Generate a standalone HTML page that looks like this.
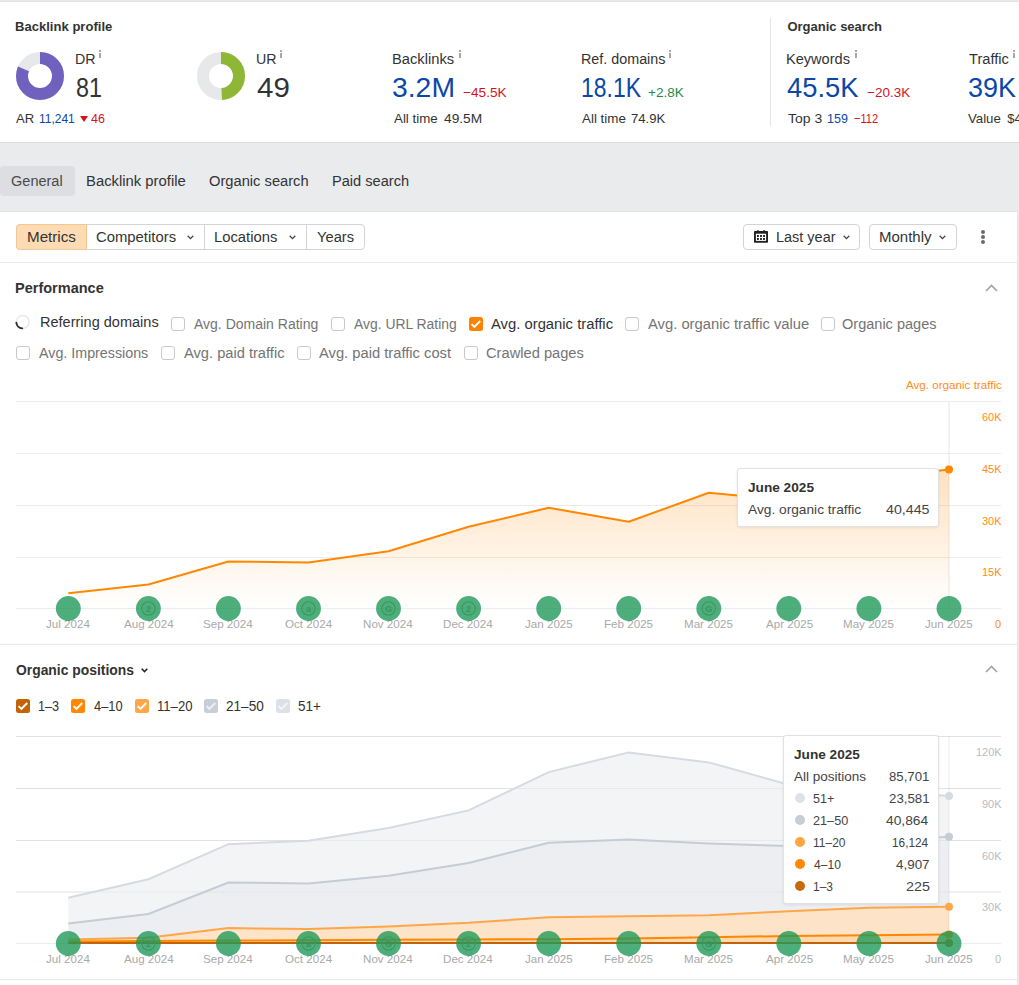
<!DOCTYPE html>
<html><head><meta charset="utf-8"><style>
html,body{margin:0;padding:0}
body{width:1019px;height:985px;position:relative;overflow:hidden;background:#eaebed;font-family:'Liberation Sans', sans-serif}
.t{position:absolute;white-space:nowrap;line-height:1}
</style></head><body>
<div style="position:absolute;left:0px;top:1px;width:1019px;height:1px;background:#e3e4e7"></div>
<div style="position:absolute;left:0px;top:2px;width:1019px;height:140px;background:#fff"></div>
<div style="position:absolute;left:0px;top:142px;width:1019px;height:1px;background:#dcdde0"></div>
<div class="t" style="left:15.49px;top:20px;font-size:13px;color:#333333;font-weight:bold;transform:scaleX(1.0053);transform-origin:0 0;">Backlink profile</div>
<div class="t" style="left:787.40px;top:20px;font-size:13px;color:#333333;font-weight:bold;">Organic search</div>
<div style="position:absolute;left:770px;top:18px;width:1px;height:108px;background:#e6e6e6"></div>
<svg style="position:absolute;left:16px;top:52px" width="48" height="48" viewBox="0 0 48 48"><circle cx="24" cy="24" r="18" fill="none" stroke="#e7e8ea" stroke-width="12"/><circle cx="24" cy="24" r="18" fill="none" stroke="#7161bf" stroke-width="12" stroke-dasharray="91.61 113.10" transform="rotate(-90 24 24)"/></svg>
<svg style="position:absolute;left:197px;top:52px" width="48" height="48" viewBox="0 0 48 48"><circle cx="24" cy="24" r="18" fill="none" stroke="#e7e8ea" stroke-width="12"/><circle cx="24" cy="24" r="18" fill="none" stroke="#8db735" stroke-width="12" stroke-dasharray="55.42 113.10" transform="rotate(-90 24 24)"/></svg>
<div class="t" style="left:75.48px;top:52px;font-size:14px;color:#333333;transform:scaleX(1.0167);transform-origin:0 0;">DR</div>
<div style="position:absolute;left:99px;top:50px;width:2px;height:2px;background:#aaaaaa"></div>
<div style="position:absolute;left:99px;top:53px;width:2px;height:5px;background:#a6a6a6"></div>
<div class="t" style="left:76.24px;top:75px;font-size:27px;color:#333333;transform:scaleX(0.8643);transform-origin:0 0;">81</div>
<div class="t" style="left:15.90px;top:112px;font-size:13px;color:#333333;transform:scaleX(1.0059);transform-origin:0 0;">AR</div>
<div class="t" style="left:38.58px;top:112px;font-size:13px;color:#0b47a8;transform:scaleX(0.9216);transform-origin:0 0;">11,241</div>
<svg style="position:absolute;left:80px;top:116px" width="8" height="6" viewBox="0 0 8 6"><path d="M0 0H8L4 6Z" fill="#d6131b"/></svg>
<div class="t" style="left:90.70px;top:112px;font-size:13px;color:#d6131b;transform:scaleX(0.9643);transform-origin:0 0;">46</div>
<div class="t" style="left:256.08px;top:52px;font-size:14px;color:#333333;transform:scaleX(1.0167);transform-origin:0 0;">UR</div>
<div style="position:absolute;left:280px;top:50px;width:2px;height:2px;background:#aaaaaa"></div>
<div style="position:absolute;left:280px;top:53px;width:2px;height:5px;background:#a6a6a6"></div>
<div class="t" style="left:256.61px;top:75px;font-size:27px;color:#333333;transform:scaleX(1.0929);transform-origin:0 0;">49</div>
<div class="t" style="left:392.45px;top:52px;font-size:14px;color:#333333;transform:scaleX(1.0500);transform-origin:0 0;">Backlinks</div>
<div style="position:absolute;left:459px;top:50px;width:2px;height:2px;background:#aaaaaa"></div>
<div style="position:absolute;left:459px;top:53px;width:2px;height:5px;background:#a6a6a6"></div>
<div class="t" style="left:392.45px;top:75px;font-size:27px;color:#0b47a8;transform:scaleX(1.0491);transform-origin:0 0;">3.2M</div>
<div class="t" style="left:462.95px;top:86px;font-size:13px;color:#d6131b;transform:scaleX(1.0500);transform-origin:0 0;">&minus;45.5K</div>
<div class="t" style="left:393.50px;top:112px;font-size:13px;color:#333333;transform:scaleX(1.0238);transform-origin:0 0;">All time</div>
<div class="t" style="left:444.00px;top:112px;font-size:13px;color:#333333;transform:scaleX(1.0571);transform-origin:0 0;">49.5M</div>
<div class="t" style="left:580.98px;top:52px;font-size:14px;color:#333333;transform:scaleX(1.0235);transform-origin:0 0;">Ref. domains</div>
<div style="position:absolute;left:669px;top:50px;width:2px;height:2px;background:#aaaaaa"></div>
<div style="position:absolute;left:669px;top:53px;width:2px;height:5px;background:#a6a6a6"></div>
<div class="t" style="left:580.90px;top:75px;font-size:27px;color:#0b47a8;transform:scaleX(0.8500);transform-origin:0 0;">18.1K</div>
<div class="t" style="left:648.16px;top:86px;font-size:13px;color:#1f8a4c;transform:scaleX(1.0394);transform-origin:0 0;">+2.8K</div>
<div class="t" style="left:581.90px;top:112px;font-size:13px;color:#333333;transform:scaleX(1.0286);transform-origin:0 0;">All time</div>
<div class="t" style="left:631.39px;top:112px;font-size:13px;color:#333333;transform:scaleX(1.0091);transform-origin:0 0;">74.9K</div>
<div class="t" style="left:786.36px;top:52px;font-size:14px;color:#333333;transform:scaleX(1.0400);transform-origin:0 0;">Keywords</div>
<div style="position:absolute;left:855px;top:50px;width:2px;height:2px;background:#aaaaaa"></div>
<div style="position:absolute;left:855px;top:53px;width:2px;height:5px;background:#a6a6a6"></div>
<div class="t" style="left:787.29px;top:75px;font-size:27px;color:#0b47a8;transform:scaleX(1.0130);transform-origin:0 0;">45.5K</div>
<div class="t" style="left:866.56px;top:86px;font-size:13px;color:#d6131b;transform:scaleX(1.0375);transform-origin:0 0;">&minus;20.3K</div>
<div class="t" style="left:787.50px;top:112px;font-size:13px;color:#333333;transform:scaleX(1.0742);transform-origin:0 0;">Top 3</div>
<div class="t" style="left:827.03px;top:112px;font-size:13px;color:#0b47a8;transform:scaleX(0.9650);transform-origin:0 0;">159</div>
<div class="t" style="left:854.05px;top:112px;font-size:13px;color:#d6131b;transform:scaleX(0.8500);transform-origin:0 0;">&minus;112</div>
<div class="t" style="left:969.10px;top:52px;font-size:14px;color:#333333;transform:scaleX(1.0447);transform-origin:0 0;">Traffic</div>
<div style="position:absolute;left:1013px;top:50px;width:2px;height:2px;background:#aaaaaa"></div>
<div style="position:absolute;left:1013px;top:53px;width:2px;height:5px;background:#a6a6a6"></div>
<div class="t" style="left:968.00px;top:75px;font-size:27px;color:#0b47a8;">39K</div>
<div class="t" style="left:968.40px;top:112px;font-size:13px;color:#333333;transform:scaleX(1.0156);transform-origin:0 0;">Value</div>
<div class="t" style="left:1007.30px;top:112px;font-size:13px;color:#333333;">$4</div>
<div style="position:absolute;left:0px;top:166px;width:75px;height:30px;background:#dcdee2;border-radius:4px"></div>
<div class="t" style="left:11.36px;top:174px;font-size:14px;color:#4a4a4a;transform:scaleX(1.0375);transform-origin:0 0;">General</div>
<div class="t" style="left:85.94px;top:174px;font-size:14px;color:#333333;transform:scaleX(1.0591);transform-origin:0 0;">Backlink profile</div>
<div class="t" style="left:209.35px;top:174px;font-size:14px;color:#333333;transform:scaleX(1.0495);transform-origin:0 0;">Organic search</div>
<div class="t" style="left:331.76px;top:174px;font-size:14px;color:#333333;transform:scaleX(1.0431);transform-origin:0 0;">Paid search</div>
<div style="position:absolute;left:0px;top:211px;width:1018px;height:774px;background:#fff;border-top:1px solid #e3e4e7;border-right:1px solid #e3e4e7;box-sizing:border-box"></div>
<div style="position:absolute;left:16px;top:224px;width:349px;height:26px;border:1px solid #d2d4d8;border-radius:4px;box-sizing:border-box"></div>
<div style="position:absolute;left:16px;top:224px;width:71px;height:26px;background:#fddbb4;border:1px solid #f3c792;border-radius:4px 0 0 4px;box-sizing:border-box"></div>
<div style="position:absolute;left:204px;top:224px;width:1px;height:26px;background:#d2d4d8"></div>
<div style="position:absolute;left:306px;top:224px;width:1px;height:26px;background:#d2d4d8"></div>
<div class="t" style="left:26.62px;top:230px;font-size:14px;color:#333333;transform:scaleX(1.0841);transform-origin:0 0;">Metrics</div>
<div class="t" style="left:96.44px;top:230px;font-size:14px;color:#333333;transform:scaleX(1.0608);transform-origin:0 0;">Competitors</div>
<div class="t" style="left:214.44px;top:230px;font-size:14px;color:#333333;transform:scaleX(1.0576);transform-origin:0 0;">Locations</div>
<div class="t" style="left:316.85px;top:230px;font-size:14px;color:#333333;transform:scaleX(1.0500);transform-origin:0 0;">Years</div>
<svg style="position:absolute;left:187px;top:235px" width="7" height="5" viewBox="0 0 7 5"><path d="M0.7 0.8L3.5 3.6L6.3 0.8" fill="none" stroke="#444" stroke-width="1.3"/></svg>
<svg style="position:absolute;left:289px;top:235px" width="7" height="5" viewBox="0 0 7 5"><path d="M0.7 0.8L3.5 3.6L6.3 0.8" fill="none" stroke="#444" stroke-width="1.3"/></svg>
<div style="position:absolute;left:743px;top:224px;width:117px;height:26px;border:1px solid #d2d4d8;border-radius:4px;box-sizing:border-box"></div>
<div style="position:absolute;left:869px;top:224px;width:88px;height:26px;border:1px solid #d2d4d8;border-radius:4px;box-sizing:border-box"></div>
<svg style="position:absolute;left:750px;top:226px" width="22" height="22" viewBox="0 0 22 22"><rect x="4" y="5" width="14" height="11.75" rx="0.8" fill="#222"/><rect x="5.9" y="7.7" width="10.2" height="7.2" fill="#fff"/><rect x="7.1" y="4" width="1.8" height="2" rx="0.9" fill="#222"/><rect x="13.2" y="4" width="1.8" height="2" rx="0.9" fill="#222"/><g fill="#111"><rect x="7" y="9.05" width="1.85" height="1.85"/><rect x="10.05" y="9.05" width="1.85" height="1.85"/><rect x="13.1" y="9.05" width="1.85" height="1.85"/><rect x="7" y="12.06" width="1.85" height="1.85"/><rect x="10.05" y="12.06" width="1.85" height="1.85"/><rect x="13.1" y="12.06" width="1.85" height="1.85"/></g></svg>
<div class="t" style="left:775.67px;top:230px;font-size:14px;color:#333333;transform:scaleX(1.0333);transform-origin:0 0;">Last year</div>
<svg style="position:absolute;left:843px;top:235px" width="7" height="5" viewBox="0 0 7 5"><path d="M0.7 0.8L3.5 3.6L6.3 0.8" fill="none" stroke="#444" stroke-width="1.3"/></svg>
<div class="t" style="left:879.23px;top:230px;font-size:14px;color:#333333;transform:scaleX(1.0708);transform-origin:0 0;">Monthly</div>
<svg style="position:absolute;left:939px;top:235px" width="7" height="5" viewBox="0 0 7 5"><path d="M0.7 0.8L3.5 3.6L6.3 0.8" fill="none" stroke="#444" stroke-width="1.3"/></svg>
<div style="position:absolute;left:981px;top:230px;width:4px;height:4px;background:#6b6b6b;border-radius:50%"></div>
<div style="position:absolute;left:981px;top:235px;width:4px;height:4px;background:#6b6b6b;border-radius:50%"></div>
<div style="position:absolute;left:981px;top:240px;width:4px;height:4px;background:#6b6b6b;border-radius:50%"></div>
<div style="position:absolute;left:0px;top:262px;width:1017px;height:1px;background:#eaeaea"></div>
<div class="t" style="left:15.26px;top:281px;font-size:14px;color:#333333;font-weight:bold;transform:scaleX(1.0369);transform-origin:0 0;">Performance</div>
<svg style="position:absolute;left:985px;top:284px" width="13" height="8" viewBox="0 0 13 8"><path d="M1 7L6.5 1.5L12 7" fill="none" stroke="#a3a3a3" stroke-width="1.6"/></svg>
<svg style="position:absolute;left:14px;top:314px" width="18" height="18" viewBox="0 0 18 18"><circle cx="8.75" cy="8" r="6.4" fill="none" stroke="#e8e8e8" stroke-width="1.5"/><path d="M2.35 8.6A6.4 6.4 0 0 0 8.2 14.4" fill="none" stroke="#2e2e2e" stroke-width="1.9" stroke-linecap="round"/></svg>
<div class="t" style="left:39.76px;top:315px;font-size:14px;color:#333333;transform:scaleX(1.0372);transform-origin:0 0;">Referring domains</div>
<div style="position:absolute;left:171px;top:317px;width:14px;height:14px;border:1px solid #c9c9c9;border-radius:3px;box-sizing:border-box"></div>
<div class="t" style="left:194.00px;top:317px;font-size:14px;color:#747474;">Avg. Domain Rating</div>
<div style="position:absolute;left:331px;top:317px;width:14px;height:14px;border:1px solid #c9c9c9;border-radius:3px;box-sizing:border-box"></div>
<div class="t" style="left:353.80px;top:317px;font-size:14px;color:#747474;transform:scaleX(0.9922);transform-origin:0 0;">Avg. URL Rating</div>
<svg style="position:absolute;left:469px;top:317px" width="14" height="14" viewBox="0 0 14 14"><rect x="0" y="0" width="14" height="14" rx="2.5" fill="#ff8200"/><path d="M2.6 7.2L5.4 10L11.2 4" fill="none" stroke="#fff" stroke-width="1.9"/></svg>
<div class="t" style="left:491.40px;top:317px;font-size:14px;color:#333333;transform:scaleX(1.0574);transform-origin:0 0;">Avg. organic traffic</div>
<div style="position:absolute;left:625px;top:317px;width:14px;height:14px;border:1px solid #c9c9c9;border-radius:3px;box-sizing:border-box"></div>
<div class="t" style="left:647.60px;top:317px;font-size:14px;color:#747474;transform:scaleX(1.0553);transform-origin:0 0;">Avg. organic traffic value</div>
<div style="position:absolute;left:821px;top:317px;width:14px;height:14px;border:1px solid #c9c9c9;border-radius:3px;box-sizing:border-box"></div>
<div class="t" style="left:842.16px;top:317px;font-size:14px;color:#747474;transform:scaleX(1.0378);transform-origin:0 0;">Organic pages</div>
<div style="position:absolute;left:16px;top:346px;width:14px;height:14px;border:1px solid #c9c9c9;border-radius:3px;box-sizing:border-box"></div>
<div class="t" style="left:38.90px;top:346px;font-size:14px;color:#747474;transform:scaleX(1.0196);transform-origin:0 0;">Avg. Impressions</div>
<div style="position:absolute;left:161px;top:346px;width:14px;height:14px;border:1px solid #c9c9c9;border-radius:3px;box-sizing:border-box"></div>
<div class="t" style="left:183.50px;top:346px;font-size:14px;color:#747474;transform:scaleX(1.0469);transform-origin:0 0;">Avg. paid traffic</div>
<div style="position:absolute;left:297px;top:346px;width:14px;height:14px;border:1px solid #c9c9c9;border-radius:3px;box-sizing:border-box"></div>
<div class="t" style="left:319.00px;top:346px;font-size:14px;color:#747474;transform:scaleX(1.0516);transform-origin:0 0;">Avg. paid traffic cost</div>
<div style="position:absolute;left:464px;top:346px;width:14px;height:14px;border:1px solid #c9c9c9;border-radius:3px;box-sizing:border-box"></div>
<div class="t" style="left:485.55px;top:346px;font-size:14px;color:#747474;transform:scaleX(1.0478);transform-origin:0 0;">Crawled pages</div>
<div class="t" style="left:905.90px;top:380px;font-size:11px;color:#ff8c1a;transform:scaleX(1.0567);transform-origin:0 0;">Avg. organic traffic</div>
<svg style="position:absolute;left:0;top:0" width="1019" height="985"><defs><linearGradient id="g1" x1="0" y1="0" x2="0" y2="1"><stop offset="0" stop-color="#ff8800" stop-opacity="0.25"/><stop offset="1" stop-color="#ff8800" stop-opacity="0"/></linearGradient></defs><line x1="16" x2="1001" y1="401.5" y2="401.5" stroke="#ececec" stroke-width="1"/><line x1="16" x2="1001" y1="453.5" y2="453.5" stroke="#ececec" stroke-width="1"/><line x1="16" x2="1001" y1="505.5" y2="505.5" stroke="#ececec" stroke-width="1"/><line x1="16" x2="1001" y1="557.5" y2="557.5" stroke="#ececec" stroke-width="1"/><line x1="16" x2="1001" y1="608.5" y2="608.5" stroke="#ececec" stroke-width="1"/><line x1="949" x2="949" y1="402" y2="608" stroke="#e6e6e6" stroke-width="1"/><polygon points="68.3,593.3 148.4,584.5 228.4,561.5 308.5,562.4 388.5,551.3 468.6,526.8 548.7,507.7 628.7,521.8 708.8,492.7 788.8,500.5 868.9,478.5 949.0,469.4 949,608.5 68.3,608.5" fill="url(#g1)"/><polyline points="68.3,593.3 148.4,584.5 228.4,561.5 308.5,562.4 388.5,551.3 468.6,526.8 548.7,507.7 628.7,521.8 708.8,492.7 788.8,500.5 868.9,478.5 949.0,469.4" fill="none" stroke="#ff8800" stroke-width="2" stroke-linejoin="round"/><circle cx="949" cy="469.4" r="4" fill="#ff8800"/></svg>
<div class="t" style="left:46.14px;top:619px;font-size:11px;color:#a9a9a9;transform:scaleX(1.0550);transform-origin:0 0;">Jul 2024</div>
<div class="t" style="left:123.57px;top:619px;font-size:11px;color:#a9a9a9;transform:scaleX(1.0550);transform-origin:0 0;">Aug 2024</div>
<div class="t" style="left:203.10px;top:619px;font-size:11px;color:#a9a9a9;transform:scaleX(1.0550);transform-origin:0 0;">Sep 2024</div>
<div class="t" style="left:284.74px;top:619px;font-size:11px;color:#a9a9a9;transform:scaleX(1.0550);transform-origin:0 0;">Oct 2024</div>
<div class="t" style="left:363.22px;top:619px;font-size:11px;color:#a9a9a9;transform:scaleX(1.0550);transform-origin:0 0;">Nov 2024</div>
<div class="t" style="left:443.28px;top:619px;font-size:11px;color:#a9a9a9;transform:scaleX(1.0550);transform-origin:0 0;">Dec 2024</div>
<div class="t" style="left:524.92px;top:619px;font-size:11px;color:#a9a9a9;transform:scaleX(1.0550);transform-origin:0 0;">Jan 2025</div>
<div class="t" style="left:603.93px;top:619px;font-size:11px;color:#a9a9a9;transform:scaleX(1.0550);transform-origin:0 0;">Feb 2025</div>
<div class="t" style="left:683.99px;top:619px;font-size:11px;color:#a9a9a9;transform:scaleX(1.0550);transform-origin:0 0;">Mar 2025</div>
<div class="t" style="left:765.63px;top:619px;font-size:11px;color:#a9a9a9;transform:scaleX(1.0550);transform-origin:0 0;">Apr 2025</div>
<div class="t" style="left:843.05px;top:619px;font-size:11px;color:#a9a9a9;transform:scaleX(1.0550);transform-origin:0 0;">May 2025</div>
<div class="t" style="left:925.22px;top:619px;font-size:11px;color:#a9a9a9;transform:scaleX(1.0550);transform-origin:0 0;">Jun 2025</div>
<div class="t" style="left:982.00px;top:412px;font-size:11px;color:#ff8c1a;">60K</div>
<div class="t" style="left:982.00px;top:464px;font-size:11px;color:#ff8c1a;">45K</div>
<div class="t" style="left:982.00px;top:516px;font-size:11px;color:#ff8c1a;">30K</div>
<div class="t" style="left:982.00px;top:567px;font-size:11px;color:#ff8c1a;">15K</div>
<div class="t" style="left:995.00px;top:619px;font-size:11px;color:#ff8c1a;">0</div>
<svg style="position:absolute;left:0;top:0" width="1019" height="985"><circle cx="68.3" cy="608.5" r="12.45" fill="#209a5a" fill-opacity="0.8"/><circle cx="148.4" cy="608.5" r="12.45" fill="#209a5a" fill-opacity="0.8"/><circle cx="148.4" cy="608.5" r="6.7" fill="none" stroke="#3a9864" stroke-width="1.1"/><text x="148.4" y="611.7" text-anchor="middle" font-family="Liberation Sans" font-weight="bold" font-size="9" fill="#389460">2</text><circle cx="228.4" cy="608.5" r="12.45" fill="#209a5a" fill-opacity="0.8"/><circle cx="308.5" cy="608.5" r="12.45" fill="#209a5a" fill-opacity="0.8"/><circle cx="308.5" cy="608.5" r="6.7" fill="none" stroke="#3a9864" stroke-width="1.1"/><text x="308.5" y="611.7" text-anchor="middle" font-family="Liberation Sans" font-weight="bold" font-size="9" fill="#389460">a</text><circle cx="388.5" cy="608.5" r="12.45" fill="#209a5a" fill-opacity="0.8"/><circle cx="388.5" cy="608.5" r="6.7" fill="none" stroke="#3a9864" stroke-width="1.1"/><text x="388.5" y="611.7" text-anchor="middle" font-family="Liberation Sans" font-weight="bold" font-size="9" fill="#389460">G</text><circle cx="468.6" cy="608.5" r="12.45" fill="#209a5a" fill-opacity="0.8"/><circle cx="468.6" cy="608.5" r="6.7" fill="none" stroke="#3a9864" stroke-width="1.1"/><text x="468.6" y="611.7" text-anchor="middle" font-family="Liberation Sans" font-weight="bold" font-size="9" fill="#389460">2</text><circle cx="548.7" cy="608.5" r="12.45" fill="#209a5a" fill-opacity="0.8"/><circle cx="628.7" cy="608.5" r="12.45" fill="#209a5a" fill-opacity="0.8"/><circle cx="708.8" cy="608.5" r="12.45" fill="#209a5a" fill-opacity="0.8"/><circle cx="708.8" cy="608.5" r="6.7" fill="none" stroke="#3a9864" stroke-width="1.1"/><text x="708.8" y="611.7" text-anchor="middle" font-family="Liberation Sans" font-weight="bold" font-size="9" fill="#389460">G</text><circle cx="788.8" cy="608.5" r="12.45" fill="#209a5a" fill-opacity="0.8"/><circle cx="868.9" cy="608.5" r="12.45" fill="#209a5a" fill-opacity="0.8"/><circle cx="949.0" cy="608.5" r="12.45" fill="#209a5a" fill-opacity="0.8"/></svg>
<div style="position:absolute;left:737px;top:468px;width:202px;height:59px;background:#fff;border:1px solid #e2e2e2;border-radius:3px;box-sizing:border-box;box-shadow:0 1px 3px rgba(0,0,0,0.08)"></div>
<div class="t" style="left:747.80px;top:481px;font-size:13px;color:#333333;font-weight:bold;transform:scaleX(1.0492);transform-origin:0 0;">June 2025</div>
<div class="t" style="left:747.80px;top:503px;font-size:13px;color:#444444;transform:scaleX(1.0551);transform-origin:0 0;">Avg. organic traffic</div>
<div class="t" style="left:886.00px;top:503px;font-size:13px;color:#444444;transform:scaleX(1.0949);transform-origin:0 0;">40,445</div>
<div style="position:absolute;left:0px;top:644px;width:1017px;height:1px;background:#eaeaea"></div>
<div class="t" style="left:15.51px;top:663px;font-size:14px;color:#333333;font-weight:bold;transform:scaleX(0.9907);transform-origin:0 0;">Organic positions</div>
<svg style="position:absolute;left:141px;top:668px" width="7" height="5" viewBox="0 0 7 5"><path d="M0.7 0.8L3.5 3.6L6.3 0.8" fill="none" stroke="#262626" stroke-width="1.6"/></svg>
<svg style="position:absolute;left:985px;top:665px" width="13" height="8" viewBox="0 0 13 8"><path d="M1 7L6.5 1.5L12 7" fill="none" stroke="#a3a3a3" stroke-width="1.6"/></svg>
<svg style="position:absolute;left:16px;top:699px" width="14" height="14" viewBox="0 0 14 14"><rect x="0" y="0" width="14" height="14" rx="2.5" fill="#c46208"/><path d="M2.6 7.2L5.4 10L11.2 4" fill="none" stroke="#fff" stroke-width="1.9"/></svg>
<div class="t" style="left:37.60px;top:699px;font-size:14px;color:#333333;transform:scaleX(0.9045);transform-origin:0 0;">1&ndash;3</div>
<svg style="position:absolute;left:71px;top:699px" width="14" height="14" viewBox="0 0 14 14"><rect x="0" y="0" width="14" height="14" rx="2.5" fill="#ff8800"/><path d="M2.6 7.2L5.4 10L11.2 4" fill="none" stroke="#fff" stroke-width="1.9"/></svg>
<div class="t" style="left:93.90px;top:699px;font-size:14px;color:#333333;transform:scaleX(0.9194);transform-origin:0 0;">4&ndash;10</div>
<svg style="position:absolute;left:135px;top:699px" width="14" height="14" viewBox="0 0 14 14"><rect x="0" y="0" width="14" height="14" rx="2.5" fill="#ffa648"/><path d="M2.6 7.2L5.4 10L11.2 4" fill="none" stroke="#fff" stroke-width="1.9"/></svg>
<div class="t" style="left:156.56px;top:699px;font-size:14px;color:#333333;transform:scaleX(0.9361);transform-origin:0 0;">11&ndash;20</div>
<svg style="position:absolute;left:204px;top:699px" width="14" height="14" viewBox="0 0 14 14"><rect x="0" y="0" width="14" height="14" rx="2.5" fill="#c7ced8"/><path d="M2.6 7.2L5.4 10L11.2 4" fill="none" stroke="#eef0f3" stroke-width="1.9"/></svg>
<div class="t" style="left:225.63px;top:699px;font-size:14px;color:#333333;transform:scaleX(0.9711);transform-origin:0 0;">21&ndash;50</div>
<svg style="position:absolute;left:276px;top:699px" width="14" height="14" viewBox="0 0 14 14"><rect x="0" y="0" width="14" height="14" rx="2.5" fill="#dde1e7"/><path d="M2.6 7.2L5.4 10L11.2 4" fill="none" stroke="#f3f4f6" stroke-width="1.9"/></svg>
<div class="t" style="left:297.84px;top:699px;font-size:14px;color:#333333;transform:scaleX(0.9636);transform-origin:0 0;">51+</div>
<svg style="position:absolute;left:0;top:0" width="1019" height="985"><line x1="16" x2="1001" y1="736.5" y2="736.5" stroke="#ececec" stroke-width="1"/><line x1="16" x2="1001" y1="788.5" y2="788.5" stroke="#ececec" stroke-width="1"/><line x1="16" x2="1001" y1="840.5" y2="840.5" stroke="#ececec" stroke-width="1"/><line x1="16" x2="1001" y1="892" y2="892" stroke="#ececec" stroke-width="1"/><line x1="16" x2="1001" y1="943.5" y2="943.5" stroke="#ececec" stroke-width="1"/><polygon points="68.3,897.8 148.4,879.2 228.4,844.2 308.5,840.7 388.5,828.0 468.6,810.4 548.7,772.1 628.7,752.4 708.8,762.4 788.8,784.7 868.9,790.5 949.0,796.0 949.0,836.8 868.9,841.5 788.8,846.1 708.8,843.4 628.7,839.5 548.7,842.7 468.6,863.0 388.5,875.7 308.5,883.4 228.4,882.5 148.4,914.0 68.3,923.4" fill="#f3f4f6"/><polygon points="68.3,923.4 148.4,914.0 228.4,882.5 308.5,883.4 388.5,875.7 468.6,863.0 548.7,842.7 628.7,839.5 708.8,843.4 788.8,846.1 868.9,841.5 949.0,836.8 949.0,906.8 868.9,907.8 788.8,911.2 708.8,915.2 628.7,916.3 548.7,917.2 468.6,922.8 388.5,926.6 308.5,929.0 228.4,928.1 148.4,937.8 68.3,939.6" fill="#eceef2"/><polygon points="68.3,939.6 148.4,937.8 228.4,928.1 308.5,929.0 388.5,926.6 468.6,922.8 548.7,917.2 628.7,916.3 708.8,915.2 788.8,911.2 868.9,907.8 949.0,906.8 949.0,934.6 868.9,935.2 788.8,936.0 708.8,937.2 628.7,938.6 548.7,939.2 468.6,939.5 388.5,939.8 308.5,940.3 228.4,940.5 148.4,941.0 68.3,941.5" fill="#fde4c9"/><polygon points="68.3,941.5 148.4,941.0 228.4,940.5 308.5,940.3 388.5,939.8 468.6,939.5 548.7,939.2 628.7,938.6 708.8,937.2 788.8,936.0 868.9,935.2 949.0,934.6 949.0,942.9 868.9,942.9 788.8,942.9 708.8,942.9 628.7,942.9 548.7,942.9 468.6,942.9 388.5,942.9 308.5,942.9 228.4,942.9 148.4,942.9 68.3,942.9" fill="#ffd9b0"/><line x1="16" x2="1001" y1="736.5" y2="736.5" stroke="#000" stroke-opacity="0.045" stroke-width="1"/><line x1="16" x2="1001" y1="788.5" y2="788.5" stroke="#000" stroke-opacity="0.045" stroke-width="1"/><line x1="16" x2="1001" y1="840.5" y2="840.5" stroke="#000" stroke-opacity="0.045" stroke-width="1"/><line x1="16" x2="1001" y1="892" y2="892" stroke="#000" stroke-opacity="0.045" stroke-width="1"/><line x1="949" x2="949" y1="736" y2="943" stroke="#000" stroke-opacity="0.07" stroke-width="1"/><polyline points="68.3,897.8 148.4,879.2 228.4,844.2 308.5,840.7 388.5,828.0 468.6,810.4 548.7,772.1 628.7,752.4 708.8,762.4 788.8,784.7 868.9,790.5 949.0,796.0" fill="none" stroke="#d6dbe2" stroke-width="2"/><polyline points="68.3,923.4 148.4,914.0 228.4,882.5 308.5,883.4 388.5,875.7 468.6,863.0 548.7,842.7 628.7,839.5 708.8,843.4 788.8,846.1 868.9,841.5 949.0,836.8" fill="none" stroke="#c5ccd6" stroke-width="2"/><polyline points="68.3,939.6 148.4,937.8 228.4,928.1 308.5,929.0 388.5,926.6 468.6,922.8 548.7,917.2 628.7,916.3 708.8,915.2 788.8,911.2 868.9,907.8 949.0,906.8" fill="none" stroke="#ffa648" stroke-width="2"/><polyline points="68.3,941.5 148.4,941.0 228.4,940.5 308.5,940.3 388.5,939.8 468.6,939.5 548.7,939.2 628.7,938.6 708.8,937.2 788.8,936.0 868.9,935.2 949.0,934.6" fill="none" stroke="#ff8800" stroke-width="2"/><polyline points="68.3,942.9 148.4,942.9 228.4,942.9 308.5,942.9 388.5,942.9 468.6,942.9 548.7,942.9 628.7,942.9 708.8,942.9 788.8,942.9 868.9,942.9 949.0,942.9" fill="none" stroke="#c46208" stroke-width="2"/><circle cx="949" cy="796" r="4" fill="#d6dbe2"/><circle cx="949" cy="836.8" r="4" fill="#c5ccd6"/><circle cx="949" cy="906.8" r="4" fill="#ffa648"/><circle cx="949" cy="934.6" r="4" fill="#ff8800"/><circle cx="949" cy="942.9" r="4" fill="#c46208"/></svg>
<div class="t" style="left:46.14px;top:954px;font-size:11px;color:#a9a9a9;transform:scaleX(1.0550);transform-origin:0 0;">Jul 2024</div>
<div class="t" style="left:123.57px;top:954px;font-size:11px;color:#a9a9a9;transform:scaleX(1.0550);transform-origin:0 0;">Aug 2024</div>
<div class="t" style="left:203.10px;top:954px;font-size:11px;color:#a9a9a9;transform:scaleX(1.0550);transform-origin:0 0;">Sep 2024</div>
<div class="t" style="left:284.74px;top:954px;font-size:11px;color:#a9a9a9;transform:scaleX(1.0550);transform-origin:0 0;">Oct 2024</div>
<div class="t" style="left:363.22px;top:954px;font-size:11px;color:#a9a9a9;transform:scaleX(1.0550);transform-origin:0 0;">Nov 2024</div>
<div class="t" style="left:443.28px;top:954px;font-size:11px;color:#a9a9a9;transform:scaleX(1.0550);transform-origin:0 0;">Dec 2024</div>
<div class="t" style="left:524.92px;top:954px;font-size:11px;color:#a9a9a9;transform:scaleX(1.0550);transform-origin:0 0;">Jan 2025</div>
<div class="t" style="left:603.93px;top:954px;font-size:11px;color:#a9a9a9;transform:scaleX(1.0550);transform-origin:0 0;">Feb 2025</div>
<div class="t" style="left:683.99px;top:954px;font-size:11px;color:#a9a9a9;transform:scaleX(1.0550);transform-origin:0 0;">Mar 2025</div>
<div class="t" style="left:765.63px;top:954px;font-size:11px;color:#a9a9a9;transform:scaleX(1.0550);transform-origin:0 0;">Apr 2025</div>
<div class="t" style="left:843.05px;top:954px;font-size:11px;color:#a9a9a9;transform:scaleX(1.0550);transform-origin:0 0;">May 2025</div>
<div class="t" style="left:925.22px;top:954px;font-size:11px;color:#a9a9a9;transform:scaleX(1.0550);transform-origin:0 0;">Jun 2025</div>
<div class="t" style="left:976.00px;top:747px;font-size:11px;color:#b9bcc1;">120K</div>
<div class="t" style="left:982.00px;top:799px;font-size:11px;color:#b9bcc1;">90K</div>
<div class="t" style="left:982.00px;top:851px;font-size:11px;color:#b9bcc1;">60K</div>
<div class="t" style="left:982.00px;top:902px;font-size:11px;color:#b9bcc1;">30K</div>
<div class="t" style="left:995.00px;top:954px;font-size:11px;color:#b9bcc1;">0</div>
<svg style="position:absolute;left:0;top:0" width="1019" height="985"><circle cx="68.3" cy="943.5" r="12.45" fill="#209a5a" fill-opacity="0.8"/><circle cx="148.4" cy="943.5" r="12.45" fill="#209a5a" fill-opacity="0.8"/><circle cx="148.4" cy="943.5" r="6.7" fill="none" stroke="#3a9864" stroke-width="1.1"/><text x="148.4" y="946.7" text-anchor="middle" font-family="Liberation Sans" font-weight="bold" font-size="9" fill="#389460">2</text><circle cx="228.4" cy="943.5" r="12.45" fill="#209a5a" fill-opacity="0.8"/><circle cx="308.5" cy="943.5" r="12.45" fill="#209a5a" fill-opacity="0.8"/><circle cx="308.5" cy="943.5" r="6.7" fill="none" stroke="#3a9864" stroke-width="1.1"/><text x="308.5" y="946.7" text-anchor="middle" font-family="Liberation Sans" font-weight="bold" font-size="9" fill="#389460">a</text><circle cx="388.5" cy="943.5" r="12.45" fill="#209a5a" fill-opacity="0.8"/><circle cx="388.5" cy="943.5" r="6.7" fill="none" stroke="#3a9864" stroke-width="1.1"/><text x="388.5" y="946.7" text-anchor="middle" font-family="Liberation Sans" font-weight="bold" font-size="9" fill="#389460">G</text><circle cx="468.6" cy="943.5" r="12.45" fill="#209a5a" fill-opacity="0.8"/><circle cx="468.6" cy="943.5" r="6.7" fill="none" stroke="#3a9864" stroke-width="1.1"/><text x="468.6" y="946.7" text-anchor="middle" font-family="Liberation Sans" font-weight="bold" font-size="9" fill="#389460">2</text><circle cx="548.7" cy="943.5" r="12.45" fill="#209a5a" fill-opacity="0.8"/><circle cx="628.7" cy="943.5" r="12.45" fill="#209a5a" fill-opacity="0.8"/><circle cx="708.8" cy="943.5" r="12.45" fill="#209a5a" fill-opacity="0.8"/><circle cx="708.8" cy="943.5" r="6.7" fill="none" stroke="#3a9864" stroke-width="1.1"/><text x="708.8" y="946.7" text-anchor="middle" font-family="Liberation Sans" font-weight="bold" font-size="9" fill="#389460">G</text><circle cx="788.8" cy="943.5" r="12.45" fill="#209a5a" fill-opacity="0.8"/><circle cx="868.9" cy="943.5" r="12.45" fill="#209a5a" fill-opacity="0.8"/><circle cx="949.0" cy="943.5" r="12.45" fill="#209a5a" fill-opacity="0.8"/></svg>
<div style="position:absolute;left:783px;top:735px;width:156px;height:169px;background:#fff;border:1px solid #e2e2e2;border-radius:3px;box-sizing:border-box;box-shadow:0 1px 3px rgba(0,0,0,0.08)"></div>
<div class="t" style="left:793.80px;top:748px;font-size:13px;color:#333333;font-weight:bold;transform:scaleX(1.0476);transform-origin:0 0;">June 2025</div>
<div class="t" style="left:793.80px;top:770px;font-size:13px;color:#444444;transform:scaleX(1.0391);transform-origin:0 0;">All positions</div>
<div class="t" style="left:889.38px;top:770px;font-size:13px;color:#444444;transform:scaleX(1.0158);transform-origin:0 0;">85,701</div>
<div style="position:absolute;left:795.2px;top:793.20px;width:10.2px;height:10.2px;background:#dfe3e9;border-radius:50%"></div>
<div class="t" style="left:812.73px;top:792px;font-size:13px;color:#444444;transform:scaleX(0.9667);transform-origin:0 0;">51+</div>
<div class="t" style="left:888.88px;top:792px;font-size:13px;color:#444444;transform:scaleX(1.0211);transform-origin:0 0;">23,581</div>
<div style="position:absolute;left:795.2px;top:815.15px;width:10.2px;height:10.2px;background:#c8ced8;border-radius:50%"></div>
<div class="t" style="left:812.73px;top:814px;font-size:13px;color:#444444;transform:scaleX(0.9743);transform-origin:0 0;">21&ndash;50</div>
<div class="t" style="left:886.30px;top:814px;font-size:13px;color:#444444;transform:scaleX(1.0600);transform-origin:0 0;">40,864</div>
<div style="position:absolute;left:795.2px;top:837.10px;width:10.2px;height:10.2px;background:#ffa640;border-radius:50%"></div>
<div class="t" style="left:812.78px;top:836px;font-size:13px;color:#444444;transform:scaleX(0.9235);transform-origin:0 0;">11&ndash;20</div>
<div class="t" style="left:892.39px;top:836px;font-size:13px;color:#444444;transform:scaleX(0.9077);transform-origin:0 0;">16,124</div>
<div style="position:absolute;left:795.2px;top:859.05px;width:10.2px;height:10.2px;background:#ff8800;border-radius:50%"></div>
<div class="t" style="left:813.70px;top:858px;font-size:13px;color:#444444;transform:scaleX(0.9310);transform-origin:0 0;">4&ndash;10</div>
<div class="t" style="left:895.70px;top:858px;font-size:13px;color:#444444;transform:scaleX(1.0312);transform-origin:0 0;">4,907</div>
<div style="position:absolute;left:795.2px;top:881.00px;width:10.2px;height:10.2px;background:#c76a0a;border-radius:50%"></div>
<div class="t" style="left:812.78px;top:880px;font-size:13px;color:#444444;transform:scaleX(0.9200);transform-origin:0 0;">1&ndash;3</div>
<div class="t" style="left:905.60px;top:880px;font-size:13px;color:#444444;transform:scaleX(1.1000);transform-origin:0 0;">225</div>
<div style="position:absolute;left:0px;top:979px;width:1017px;height:1px;background:#eaeaea"></div>
</body></html>
